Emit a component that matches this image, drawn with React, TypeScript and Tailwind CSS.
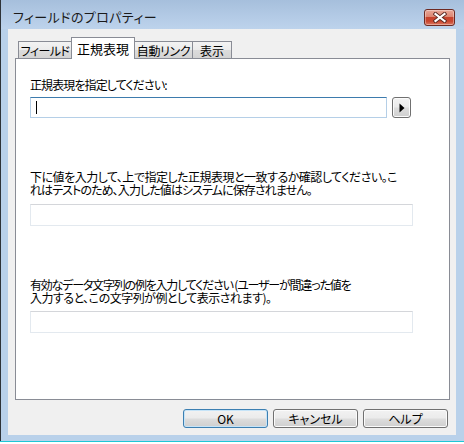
import React from "react";

const jp = { fontFamily: '"Noto Sans CJK JP", "Noto Sans", sans-serif' } as const;

function CloseButton() {
  return (
    <div className="w-[31px] h-[17px] rounded-[3px] border border-[#6e2a22] bg-[linear-gradient(to_bottom,#e9a797_0%,#dd8672_45%,#c7432d_50%,#c9462f_75%,#dc7a63_100%)] flex items-center justify-center shadow-[inset_0_0_0_1px_rgba(255,255,255,0.35)]">
      <svg width="14" height="11" viewBox="0 0 14 11">
        <path d="M2.5 2 L11.5 9 M11.5 2 L2.5 9" stroke="#5a2a24" strokeWidth="4" strokeLinecap="square" />
        <path d="M2.5 2 L11.5 9 M11.5 2 L2.5 9" stroke="#ffffff" strokeWidth="2.2" strokeLinecap="square" />
      </svg>
    </div>
  );
}

function WinButton({ label, focused }: { label: string; focused?: boolean }) {
  return (
    <div
      className={
        "w-[85px] h-[19px] rounded-[3px] border flex items-center justify-center text-[12px] leading-none text-black bg-[linear-gradient(to_bottom,#f2f2f2_0%,#ebebeb_48%,#dddddd_52%,#cfcfcf_100%)] [font-feature-settings:'palt'] " +
        (focused
          ? "border-[#3c7fb1] shadow-[inset_0_0_0_1px_#c6e4f8]"
          : "border-[#707070] shadow-[inset_0_0_0_1px_#fbfbfb]")
      }
      style={jp}
    >
      {label}
    </div>
  );
}

export default function App() {
  return (
    <div className="w-[464px] h-[444px] flex flex-col bg-[#b9d1ea] overflow-hidden" style={jp}>
      {/* title bar */}
      <div className="h-[29px] flex items-start justify-between bg-[linear-gradient(to_bottom,#a6bfdc_0%,#b4cbe6_60%,#bdd3ec_100%)] border-l border-[#2e3338]">
        <div className="pl-[12px] pt-[9px] text-[13px] leading-[16px] text-[#1a1a1a] [font-feature-settings:'palt'] tracking-[0.4px] whitespace-nowrap">
          フィールドのプロパティー
        </div>
        <div className="pt-[9px] pr-[9px]">
          <CloseButton />
        </div>
      </div>

      {/* body frame */}
      <div className="flex-1 flex border-l border-[#2e3338]">
        <div className="w-[7px]" />
        <div className="w-[448px] h-[406px] bg-[#f0f0f0] flex flex-col">
          {/* tabs */}
          <div className="pt-[7px] pl-[10px] flex items-end h-[29px]">
            <div className="w-[53px] h-[17px] border-l border-t border-[#898c95] bg-[linear-gradient(to_bottom,#f3f3f3_0%,#ebebeb_50%,#dcdcdc_51%,#d4d4d4_100%)] flex items-center justify-center text-[12px] leading-none pt-[1px] [font-feature-settings:'palt'] tracking-[-0.6px] whitespace-nowrap">
              フィールド
            </div>
            <div className="w-[64px] h-[22px] border-l border-t border-r border-[#898c95] bg-white flex items-center justify-center text-[13px] leading-none pb-[1px] relative z-10 mb-[-1px] [font-feature-settings:'palt'] whitespace-nowrap">
              正規表現
            </div>
            <div className="w-[58px] h-[17px] border-t border-r border-[#898c95] bg-[linear-gradient(to_bottom,#f3f3f3_0%,#ebebeb_50%,#dcdcdc_51%,#d4d4d4_100%)] flex items-center justify-center text-[12px] leading-none pt-[1px] [font-feature-settings:'palt'] tracking-[-0.4px] whitespace-nowrap">
              自動リンク
            </div>
            <div className="w-[39px] h-[17px] border-t border-r border-[#898c95] bg-[linear-gradient(to_bottom,#f3f3f3_0%,#ebebeb_50%,#dcdcdc_51%,#d4d4d4_100%)] flex items-center justify-center text-[12px] leading-none pt-[1px] [font-feature-settings:'palt'] whitespace-nowrap">
              表示
            </div>
          </div>

          {/* panel */}
          <div className="ml-[7px] w-[435px] h-[342px] border border-[#898c95] bg-white flex flex-col pl-[14px] text-black">
            <div className="mt-[19px] h-[14px] text-[12px] leading-[14px] [font-feature-settings:'palt'] tracking-[-0.9px] whitespace-nowrap">
              正規表現を指定してください:
            </div>
            <div className="mt-[5px] flex items-center gap-[5px]">
              <div className="w-[357px] h-[21px] border border-[#b5cfe7] border-t-[#3d7bad] bg-white flex items-center pl-[5px]">
                <div className="w-px h-[13px] bg-black" />
              </div>
              <div className="w-[19px] h-[21px] rounded-[3px] border border-[#707070] bg-[linear-gradient(to_bottom,#f2f2f2_0%,#ebebeb_48%,#dddddd_52%,#cfcfcf_100%)] shadow-[inset_0_0_0_1px_#fbfbfb] flex items-center justify-center">
                <svg width="6" height="10" viewBox="0 0 6 10">
                  <path d="M0.5 0.5 L5.5 5 L0.5 9.5 Z" fill="#000" />
                </svg>
              </div>
            </div>

            <div className="mt-[52px] text-[12px] leading-[13px] [font-feature-settings:'palt'] whitespace-nowrap flex flex-col">
              <span className="tracking-[-0.5px]">下に値を入力して、上で指定した正規表現と一致するか確認してください。こ</span>
              <span className="tracking-[-0.9px]">れはテストのため、入力した値はシステムに保存されません。</span>
            </div>
            <div className="mt-[8px] w-[383px] h-[22px] border border-[#e3e9ef] border-t-[#d4d6da] bg-white" />

            <div className="mt-[52px] text-[12px] leading-[13px] [font-feature-settings:'palt'] whitespace-nowrap flex flex-col">
              <span className="tracking-[-1.2px]">有効なデータ文字列の例を入力してください (ユーザーが間違った値を</span>
              <span className="tracking-[-0.5px]">入力すると、この文字列が例として表示されます)。</span>
            </div>
            <div className="mt-[7px] w-[383px] h-[22px] border border-[#e3e9ef] border-t-[#d4d6da] bg-white" />
          </div>

          {/* buttons */}
          <div className="mt-[9px] flex justify-end gap-[5px] pr-[8px]">
            <WinButton label="OK" focused />
            <WinButton label="キャンセル" />
            <WinButton label="ヘルプ" />
          </div>
        </div>
        <div className="flex-1" />
      </div>
      <div className="h-[1px] bg-[#1ec6d6]" />
      <div className="h-[2px] bg-white" />
    </div>
  );
}
